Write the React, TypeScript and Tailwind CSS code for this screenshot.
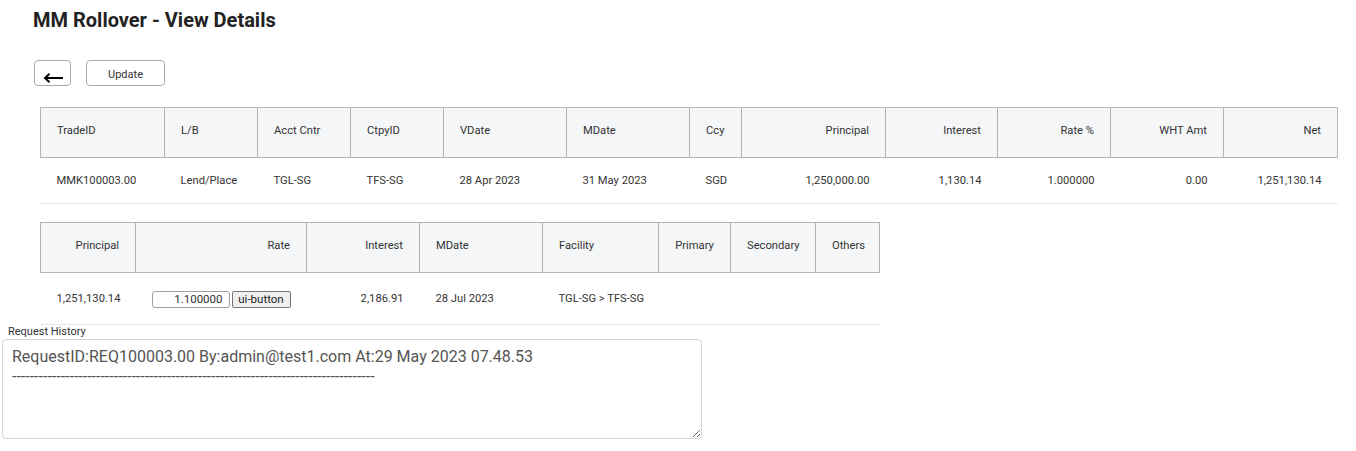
import React from 'react';

type Col = { label: string; w: number; align?: 'left' | 'right' | 'center' };

const mainCols: Col[] = [
  { label: 'TradeID', w: 124 },
  { label: 'L/B', w: 93 },
  { label: 'Acct Cntr', w: 93 },
  { label: 'CtpyID', w: 93 },
  { label: 'VDate', w: 123 },
  { label: 'MDate', w: 123 },
  { label: 'Ccy', w: 52 },
  { label: 'Principal', w: 144, align: 'right' },
  { label: 'Interest', w: 112, align: 'right' },
  { label: 'Rate %', w: 113, align: 'right' },
  { label: 'WHT Amt', w: 113, align: 'right' },
  { label: 'Net', w: 114, align: 'right' },
];

const mainRow = [
  'MMK100003.00',
  'Lend/Place',
  'TGL-SG',
  'TFS-SG',
  '28 Apr 2023',
  '31 May 2023',
  'SGD',
  '1,250,000.00',
  '1,130.14',
  '1.000000',
  '0.00',
  '1,251,130.14',
];

const rollCols: Col[] = [
  { label: 'Principal', w: 95, align: 'right' },
  { label: 'Rate', w: 171, align: 'right' },
  { label: 'Interest', w: 113, align: 'right' },
  { label: 'MDate', w: 123 },
  { label: 'Facility', w: 116 },
  { label: 'Primary', w: 72, align: 'center' },
  { label: 'Secondary', w: 85, align: 'center' },
  { label: 'Others', w: 64, align: 'center' },
];

const alignClass = (a?: string) =>
  a === 'right' ? 'text-right' : a === 'center' ? 'text-center' : 'text-left';

const HeaderCell = ({ col }: { col: Col }) => (
  <th
    style={{ width: col.w }}
    className={`h-[50px] border border-[#b4b4b4] bg-[#f5f6f8] px-4 pb-[2px] align-middle font-normal text-[11.2px] text-[#333] ${alignClass(col.align)}`}
  >
    {col.label}
  </th>
);

export default function App() {
  return (
    <div className="min-h-[451px] bg-white font-['Roboto',sans-serif] text-[#333]">
      <h1 className="pl-[33px] pt-[8px] text-[20px] font-bold leading-[24px] text-[#222]">
        MM Rollover - View Details
      </h1>

      <div className="mt-[28px] flex items-center gap-[15px] pl-[34px]">
        <button
          aria-label="Back"
          className="flex h-[26px] w-[37px] items-end justify-center rounded border border-[#a9a9a9] bg-white pb-[2px]"
        >
          <svg width="20" height="10" viewBox="0 0 20 10" fill="none" stroke="#000" strokeWidth="2" strokeLinecap="butt">
            <path d="M2 5h18" />
            <path d="M6.5 0.8 2 5l4.5 4.2" />
          </svg>
        </button>
        <button className="flex h-[26px] w-[79px] items-end justify-center rounded border border-[#a9a9a9] bg-white pb-[3px] text-[11px] leading-[14px] text-[#333]">
          Update
        </button>
      </div>

      <div className="mt-[21px] pl-[40px]">
        <table className="w-[1297px] table-fixed border-collapse">
          <thead>
            <tr>
              {mainCols.map((c) => (
                <HeaderCell key={c.label} col={c} />
              ))}
            </tr>
          </thead>
          <tbody>
            <tr className="border-b border-[#e6e6e6]">
              {mainRow.map((v, i) => (
                <td
                  key={i}
                  className={`h-[46px] px-4 pt-[2px] text-[11.2px] text-[#333] ${alignClass(mainCols[i].align)}`}
                >
                  {v}
                </td>
              ))}
            </tr>
          </tbody>
        </table>
      </div>

      <div className="mt-[18px] pl-[40px]">
        <table className="w-[839px] table-fixed border-collapse">
          <thead>
            <tr>
              {rollCols.map((c) => (
                <HeaderCell key={c.label} col={c} />
              ))}
            </tr>
          </thead>
          <tbody>
            <tr className="border-b border-[#e6e6e6]">
              <td className="h-[52px] px-4 pt-[2px] text-right text-[11.2px]">1,251,130.14</td>
              <td className="h-[52px] px-4 pt-[2px] text-right text-[11.2px]">
                <div className="flex items-center justify-end gap-[2px]">
                  <input
                    readOnly
                    value="1.100000"
                    className="h-[17px] w-[78px] rounded-[3px] border border-[#a0a0a0] bg-white px-[6px] text-right text-[11.5px] text-[#333] outline-none"
                  />
                  <button className="h-[17px] w-[60px] rounded-[2px] border border-[#767676] bg-[#efefef] text-[11.5px] leading-[15px] text-[#222]">
                    ui-button
                  </button>
                </div>
              </td>
              <td className="h-[52px] px-4 pt-[2px] text-right text-[11.2px]">2,186.91</td>
              <td className="h-[52px] px-4 pt-[2px] text-left text-[11.2px]">28 Jul 2023</td>
              <td className="h-[52px] whitespace-nowrap px-4 pt-[2px] text-left text-[11.2px]">TGL-SG &gt; TFS-SG</td>
              <td className="h-[52px]" />
              <td className="h-[52px]" />
              <td className="h-[52px]" />
            </tr>
          </tbody>
        </table>
      </div>

      <div className="pl-[2px]">
        <div className="pl-[6px] text-[11px] leading-[13px] text-[#333]">Request History</div>
        <div className="mt-[1px] h-[100px] w-[700px] resize overflow-auto rounded border border-[#d4d6da] px-[9px] pt-[7px] text-[#555]">
          <div className="text-[16px] leading-[20px]">
            RequestID:REQ100003.00 By:admin@test1.com At:29 May 2023 07.48.53
          </div>
          <div className="text-[16px] leading-[20px]">
            {'-'.repeat(82)}
          </div>
        </div>
      </div>
    </div>
  );
}
